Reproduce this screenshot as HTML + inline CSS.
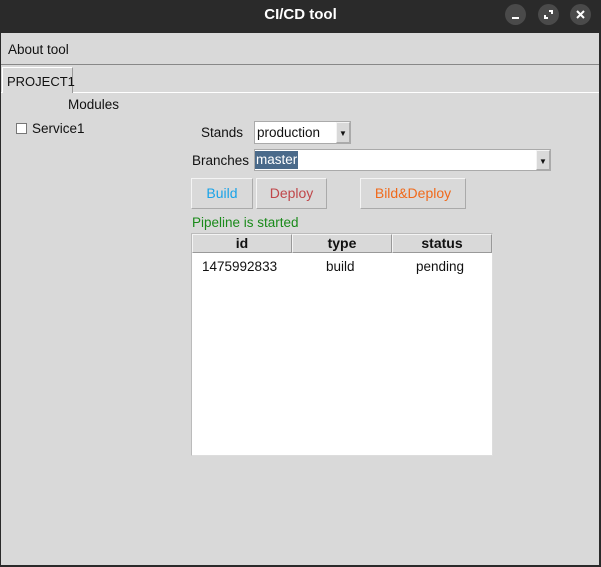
<!DOCTYPE html>
<html><head><meta charset="utf-8"><style>
*{margin:0;padding:0;box-sizing:border-box}
body{width:601px;height:567px;background:#2a2a2a;font-family:"Liberation Sans","DejaVu Sans",sans-serif;font-size:13.5px;color:#111;position:relative;overflow:hidden}
.a{position:absolute}
#win{left:1px;top:33px;width:598px;height:532px;background:#d9d9d9}
.title{left:0;top:0;width:601px;height:33px;color:#fff;font-weight:bold;font-size:15px;text-align:center;line-height:30px}
.wb{width:21px;height:21px;border-radius:50%;background:#4a4a4a;top:4px}
.btn{background:#d9d9d9;border:1px solid #aaa;border-top-color:#f4f4f4;border-left-color:#f4f4f4;text-align:center;line-height:29px;font-size:14px}
.th{background:#d9d9d9;border:1px solid #999;border-top-color:#f4f4f4;border-left-color:#f4f4f4;text-align:center;font-weight:bold;font-size:14px;line-height:17px;top:0;height:19px}
</style></head><body>
<div class="a title">CI/CD tool</div>
<svg class="a wb" style="left:505px" viewBox="0 0 21 21"><rect x="7" y="13" width="7" height="2" fill="#fff"/></svg>
<svg class="a wb" style="left:538px" viewBox="0 0 21 21"><path d="M11 7h3v3M7 11v3h3" stroke="#fff" stroke-width="2" fill="none"/></svg>
<svg class="a wb" style="left:570px" viewBox="0 0 21 21"><path d="M7 7l7 7M14 7l-7 7" stroke="#fff" stroke-width="2"/></svg>
<div id="win" class="a">
  <div class="a" style="left:0;top:0;width:598px;height:32px;border-bottom:1px solid #888"></div>
  <div class="a" style="left:7px;top:9px">About tool</div>
  <div class="a" style="left:0;top:59px;width:598px;border-top:1px solid #fff"></div>
  <div class="a" style="left:1px;top:34px;width:71px;height:26px;border:1px solid #999;border-bottom:none;border-top-color:#fff;border-left-color:#fff;background:#d9d9d9;padding:6px 0 0 4px;font-size:13px">PROJECT1</div>
  <div class="a" style="left:67px;top:64px">Modules</div>
  <div class="a" style="left:15px;top:90px;width:11px;height:11px;background:#fff;border:1px solid #777"></div>
  <div class="a" style="left:31px;top:88px">Service1</div>
  <div class="a" style="left:200px;top:92px">Stands</div>
  <div class="a" style="left:253px;top:88px;width:97px;height:23px;background:#fff;border:1px solid #aaa;padding:3px 0 0 2px">production</div>
  <div class="a btn" style="left:335px;top:89px;width:14px;height:21px;line-height:22px;font-size:8px">▼</div>
  <div class="a" style="left:191px;top:120px">Branches</div>
  <div class="a" style="left:253px;top:116px;width:297px;height:22px;background:#fff;border:1px solid #aaa"></div>
  <div class="a" style="left:254px;top:118px;height:18px;background:#4a6a8a;color:#fff;padding:1px 1px 0 1px">master</div>
  <div class="a btn" style="left:535px;top:117px;width:14px;height:20px;line-height:22px;font-size:8px">▼</div>
  <div class="a btn" style="left:190px;top:145px;width:62px;height:31px;color:#1aa3e8">Build</div>
  <div class="a btn" style="left:255px;top:145px;width:71px;height:31px;color:#c0474a">Deploy</div>
  <div class="a btn" style="left:359px;top:145px;width:106px;height:31px;color:#f06a1c">Bild&amp;Deploy</div>
  <div class="a" style="left:191px;top:182px;color:#1a8a1a">Pipeline is started</div>
  <div class="a" style="left:190px;top:200px;width:302px;height:223px;background:#fff;border:1px solid #bbb;border-bottom-color:#ddd;border-right-color:#ddd">
    <div class="a th" style="left:0;width:100px">id</div>
    <div class="a th" style="left:100px;width:100px">type</div>
    <div class="a th" style="left:200px;width:100px">status</div>
    <div class="a" style="left:10px;top:25px">1475992833</div>
    <div class="a" style="left:134px;top:25px">build</div>
    <div class="a" style="left:224px;top:25px">pending</div>
  </div>
</div>
</body></html>
